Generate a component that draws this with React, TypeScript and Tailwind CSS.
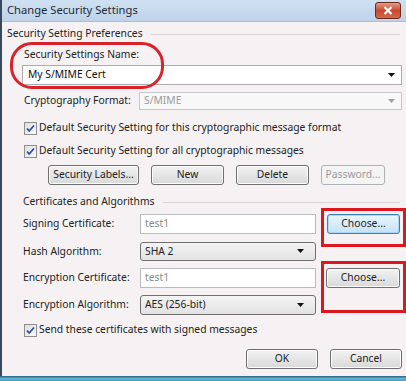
import React from "react";

const font = { fontFamily: '"Noto Sans", "Open Sans", sans-serif' };

const Btn = ({
  label,
  w,
  disabled = false,
  focused = false,
}: {
  label: string;
  w: string;
  disabled?: boolean;
  focused?: boolean;
}) => (
  <div
    className={`${w} h-full flex items-center justify-center rounded-[3px] border text-[10.3px] ${
      disabled
        ? "border-[#adb2b5] bg-[#f4f4f4] text-[#9a9a9a]"
        : focused
        ? "border-[#3c7fb1] bg-gradient-to-b from-[#eaf6fd] to-[#c4e2f5] text-[#222] shadow-[inset_0_0_0_1px_#a8d8f3]"
        : "border-[#707070] bg-gradient-to-b from-[#f2f2f2] to-[#d9d9d9] text-[#222] shadow-[inset_0_0_0_1px_#fcfcfc]"
    }`}
  >
    {label}
  </div>
);

const Arrow = ({ gray = false }: { gray?: boolean }) => (
  <svg width="8" height="5" viewBox="0 0 8 5">
    <path d="M0 0h7L3.5 4z" fill={gray ? "#a0a0a0" : "#111"} />
  </svg>
);

const Check = () => (
  <div className="w-[13px] h-[13px] border border-[#8e8f8f] bg-gradient-to-br from-[#dedede] to-[#fbfbfb] flex items-center justify-center">
    <svg width="9" height="9" viewBox="0 0 9 9">
      <path d="M1 4.5l2.2 2.5L8 1.5" fill="none" stroke="#2a4fa3" strokeWidth="1.8" />
    </svg>
  </div>
);

const CheckRow = ({ text, mt }: { text: string; mt: string }) => (
  <div className={`${mt} h-[14px] flex items-center gap-[2px] pl-[22px]`}>
    <Check />
    <span className="text-[10.3px] text-[#222]">{text}</span>
  </div>
);

const Section = ({ title, mt, lineStart }: { title: string; mt: string; lineStart: string }) => (
  <div className={`${mt} h-[14px] flex items-center`}>
    <span className={`${lineStart} text-[10.3px] text-[#222] shrink-0`}>{title}</span>
    <div className="flex-1 h-px bg-[#d5d5d5] mr-[6px]" />
  </div>
);

const Field = ({
  label,
  mt,
  h,
  value,
  kind,
}: {
  label: string;
  mt: string;
  h: string;
  value: string;
  kind: "text" | "combo";
}) => (
  <div className={`${mt} ${h} flex items-center`}>
    <span className="w-[138px] pl-[21px] text-[10.3px] text-[#222]">{label}</span>
    {kind === "text" ? (
      <div className="w-[176px] h-full border border-[#b8bcc0] bg-white flex items-center pl-[4px] text-[10.3px] text-[#8a8a8a]">
        {value}
      </div>
    ) : (
      <div className="w-[176px] h-full rounded-[3px] border border-[#707070] bg-gradient-to-b from-[#f4f4f4] to-[#e2e2e2] flex items-center justify-between pl-[4px] pr-[10px] text-[10.3px] text-[#222]">
        <span>{value}</span>
        <Arrow />
      </div>
    )}
  </div>
);

export default function App() {
  return (
    <div className="w-[406px] h-[381px] flex flex-col bg-[#3b4a5a]" style={font}>
      <div className="flex-1 flex flex-col ml-[2px] bg-[#f6f2f4] relative">
        {/* title bar */}
        <div className="h-[22px] flex items-center justify-between bg-gradient-to-b from-[#cfe0f1] to-[#bed3ea] border-b border-[#a9bed6]">
          <span className="pl-[5px] text-[11.2px] text-[#1e2a3a]">Change Security Settings</span>
          <div className="mr-[5px] w-[26px] h-[17px] rounded-[3px] border border-[#6b2a1e] bg-gradient-to-b from-[#e59a85] via-[#c9492f] to-[#d5684d] flex items-center justify-center">
            <svg width="10" height="9" viewBox="0 0 10 9">
              <path d="M1.5 1l7 7M8.5 1l-7 7" stroke="#fff" strokeWidth="2.2" />
            </svg>
          </div>
        </div>

        <div className="flex-1 flex flex-col pt-[5px]">
          <Section title="Security Setting Preferences" mt="mt-0" lineStart="pl-[5px] pr-[8px]" />

          <div className="mt-[7px] h-[14px] flex items-center pl-[22px] text-[10.3px] text-[#222]">
            Security Settings Name:
          </div>
          <div className="mt-[3px] h-[20px] mr-[4px] ml-[20px] border border-[#abadb3] bg-white flex items-center justify-between pl-[5px] pr-[5px] text-[10.3px] text-[#111]">
            <span>My S/MIME Cert</span>
            <Arrow />
          </div>

          <div className="mt-[7px] h-[18px] flex items-center">
            <span className="w-[137px] pl-[22px] text-[10.3px] text-[#222]">Cryptography Format:</span>
            <div className="flex-1 mr-[4px] h-full border border-[#c4c8cc] bg-[#f8f8f8] flex items-center justify-between pl-[4px] pr-[5px] text-[10.3px] text-[#9a9a9a]">
              <span>S/MIME</span>
              <Arrow gray />
            </div>
          </div>

          <CheckRow mt="mt-[11px]" text="Default Security Setting for this cryptographic message format" />
          <CheckRow mt="mt-[9px]" text="Default Security Setting for all cryptographic messages" />

          <div className="mt-[7px] h-[20px] flex items-center pl-[46px] gap-[12px]">
            <Btn label="Security Labels..." w="w-[91px]" />
            <Btn label="New" w="w-[73px]" />
            <Btn label="Delete" w="w-[73px]" />
            <Btn label="Password..." w="w-[64px]" disabled />
          </div>

          <Section title="Certificates and Algorithms" mt="mt-[10px]" lineStart="pl-[21px] pr-[8px]" />

          <div className="mt-[5px] h-[20px] flex items-center">
            <Field label="Signing Certificate:" mt="mt-0" h="h-full" value="test1" kind="text" />
            <div className="ml-[11px] h-full">
              <Btn label="Choose..." w="w-[73px]" focused />
            </div>
          </div>
          <Field label="Hash Algorithm:" mt="mt-[8px]" h="h-[19px]" value="SHA 2" kind="combo" />
          <div className="mt-[7px] h-[20px] flex items-center">
            <Field label="Encryption Certificate:" mt="mt-0" h="h-full" value="test1" kind="text" />
            <div className="ml-[10px] h-full">
              <Btn label="Choose..." w="w-[74px]" />
            </div>
          </div>
          <Field label="Encryption Algorithm:" mt="mt-[7px]" h="h-[20px]" value="AES (256-bit)" kind="combo" />

          <CheckRow mt="mt-[8px]" text="Send these certificates with signed messages" />

          <div className="mt-[12px] h-[20px] flex justify-end gap-[12px] pr-[4px]">
            <Btn label="OK" w="w-[72px]" />
            <Btn label="Cancel" w="w-[72px]" />
          </div>
        </div>

        {/* red annotations */}
        <div className="absolute left-[8px] top-[42px] w-[154px] h-[47px] border-[3px] border-[#d8232a] rounded-[22px]" />
        <div className="absolute left-[319px] top-[208px] w-[85px] h-[39px] border-[3px] border-[#e0161f]" />
        <div className="absolute left-[319px] top-[261px] w-[85px] h-[52px] border-[3px] border-[#e0161f]" />
      </div>
      <div className="h-[5px] bg-gradient-to-b from-[#2f5f78] via-[#5cb3d6] to-[#4aa2c6]" />
    </div>
  );
}
